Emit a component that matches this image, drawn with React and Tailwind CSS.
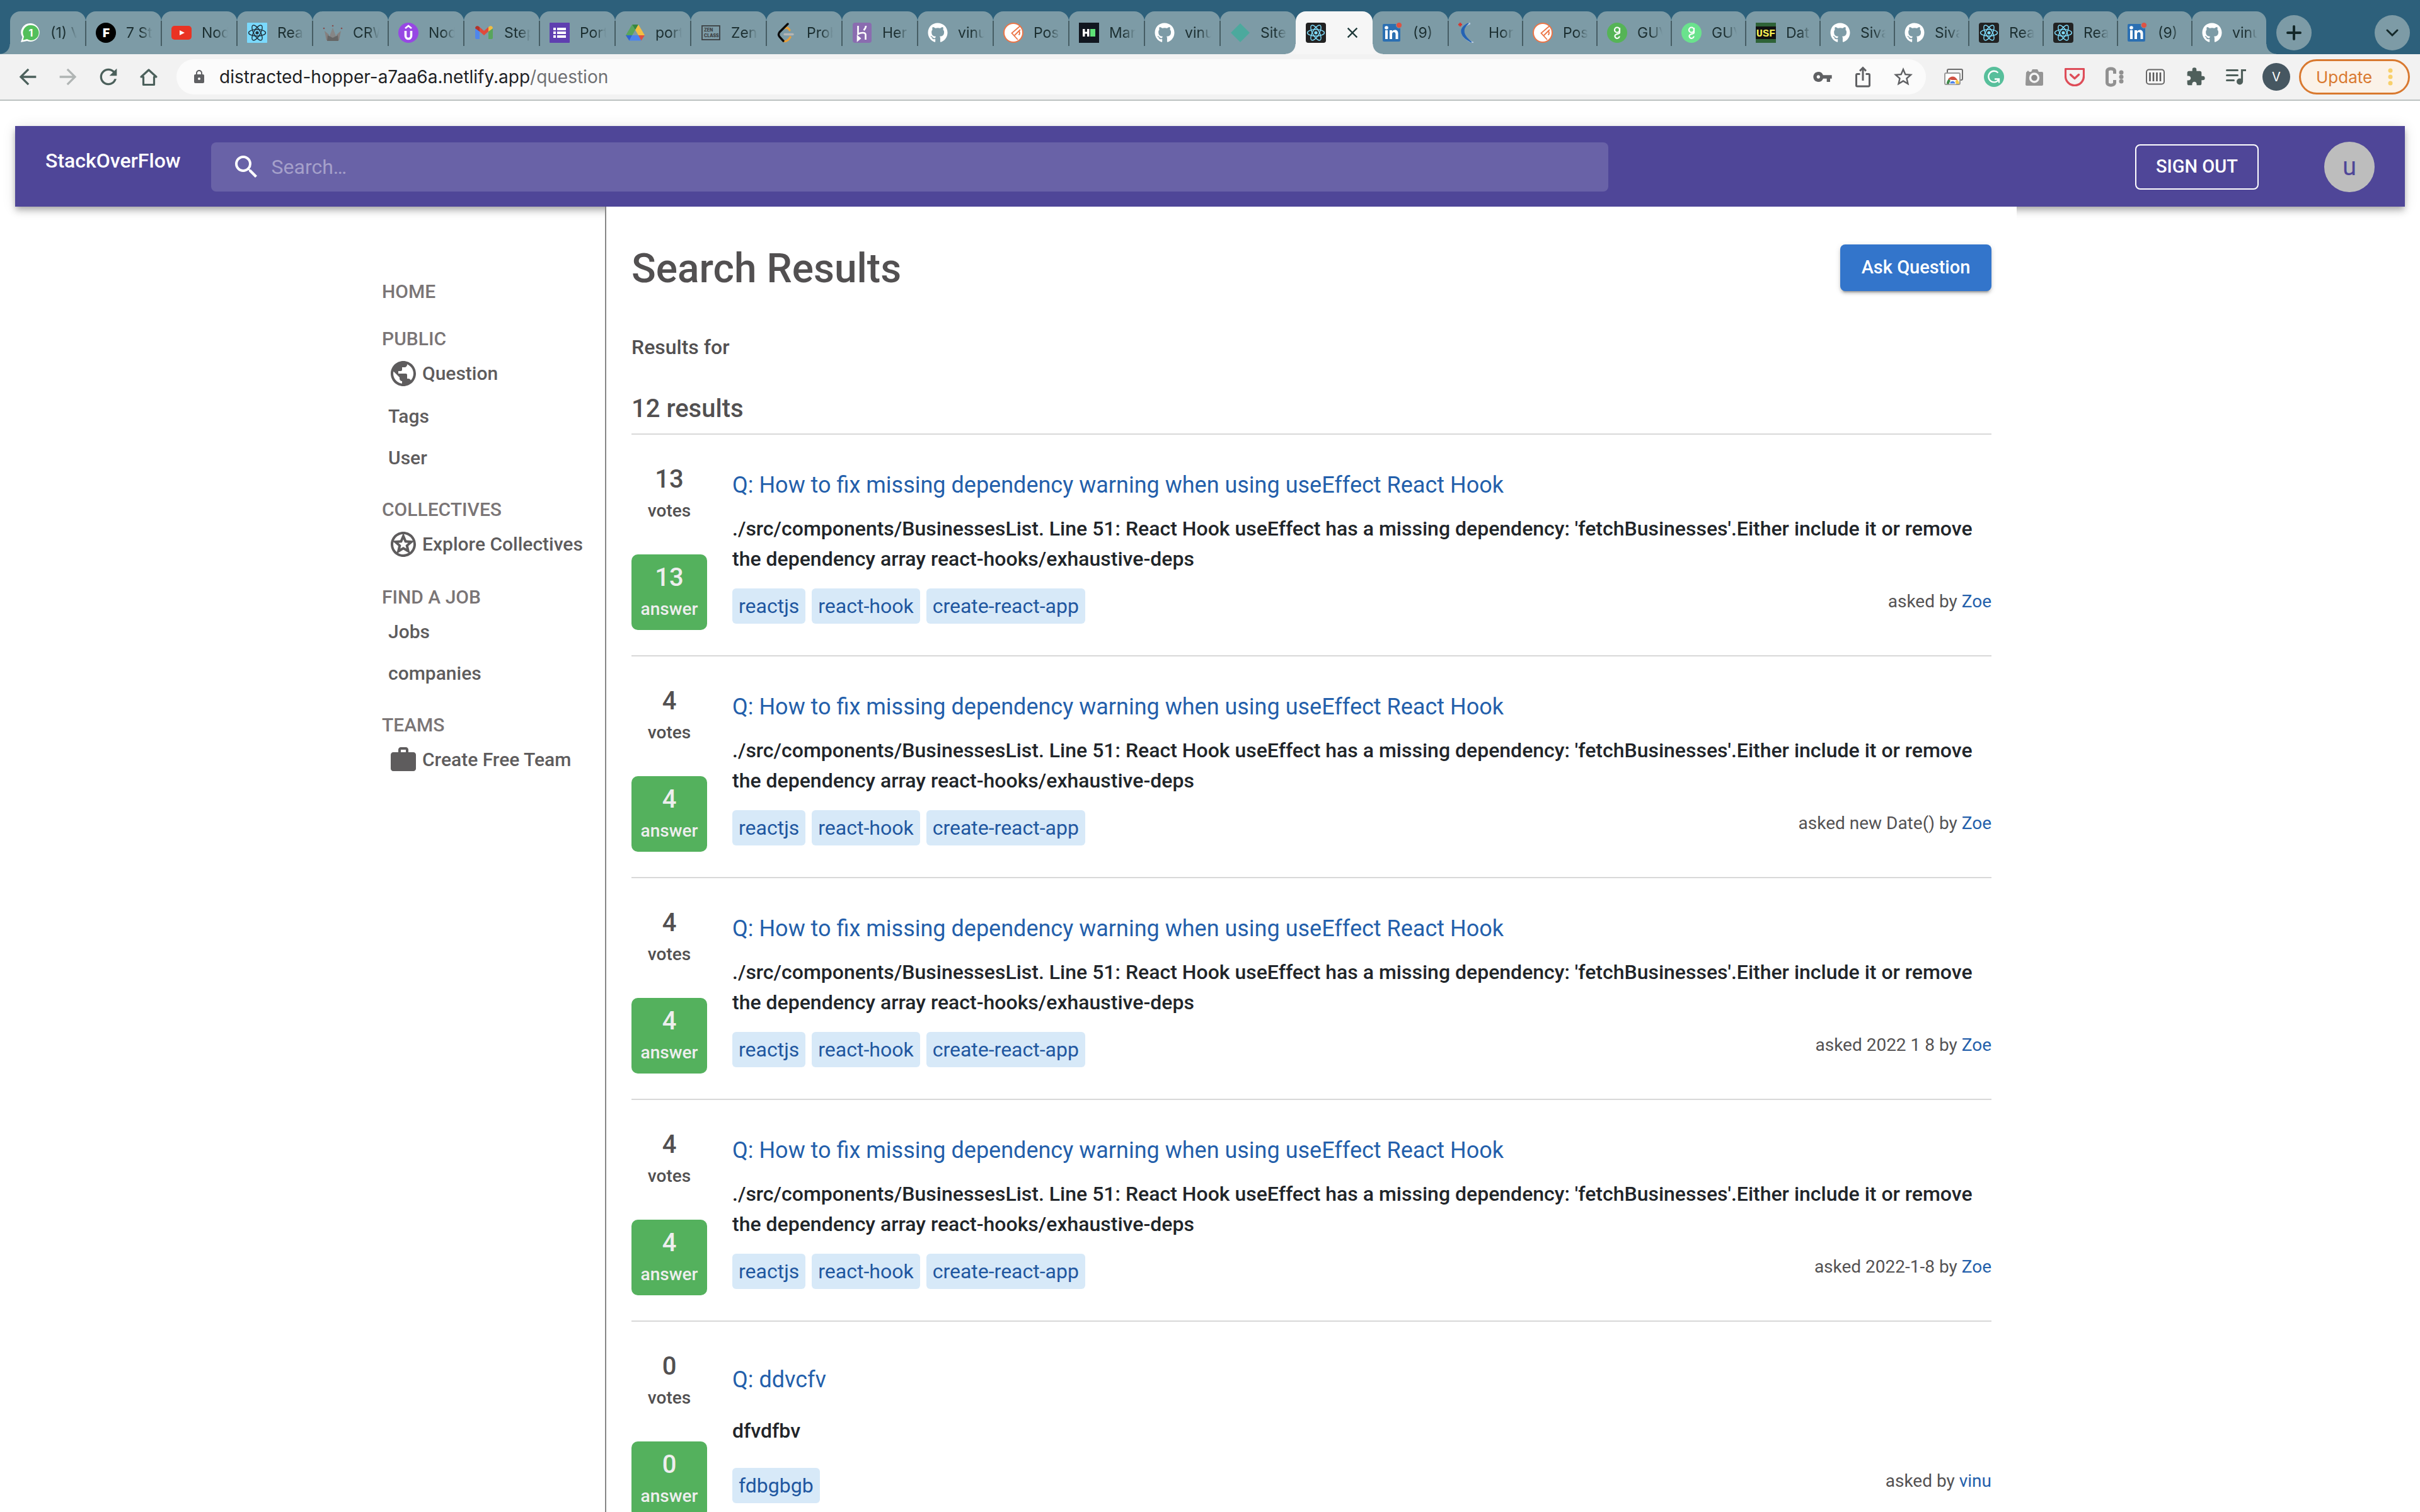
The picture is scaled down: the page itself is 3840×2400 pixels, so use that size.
import React from "react";
import {
  MdArrowBack,
  MdArrowForward,
  MdRefresh,
  MdLock,
  MdVpnKey,
  MdIosShare,
  MdStarBorder,
  MdExtension,
  MdPublic,
  MdOutlineStars,
  MdWork,
  MdSearch,
  MdClose,
} from "react-icons/md";
import { FaGithub } from "react-icons/fa";

/* ---------- favicons ---------- */

function Fav({ children }) {
  return (
    <svg viewBox="0 0 32 32" className="size-8 shrink-0" aria-hidden="true">
      {children}
    </svg>
  );
}

const glyph = { fontFamily: "Inter, sans-serif", textAnchor: "middle" };

function WhatsApp() {
  return (
    <Fav>
      <path d="M17 1a14.500 14.500 0 1 1-6 28L1 31l2.500-8A14.500 14.500 0 0 1 17 1z" fill="#fff" />
      <path d="M17 4a12 12 0 1 1-6 22l-6.500 1.800L6 22A12 12 0 0 1 17 4z" fill="#53bf5b" />
      <text x="17" y="22" fontSize="16" fontWeight="700" fill="#fff" {...glyph}>1</text>
    </Fav>
  );
}
function LetterF() {
  return (
    <Fav>
      <circle cx="16" cy="16" r="16" fill="#000" />
      <text x="16.500" y="23" fontSize="19" fontWeight="900" fill="#fff" {...glyph}>F</text>
    </Fav>
  );
}
function YouTube() {
  return (
    <Fav>
      <rect x="0" y="5" width="32" height="22" rx="5" fill="#ea3323" />
      <path d="M13 12l8 4-8 4z" fill="#fff" />
    </Fav>
  );
}
function Atom({ bg, fg, rx }) {
  return (
    <Fav>
      <rect width="32" height="32" rx={rx} fill={bg} />
      <g fill="none" stroke={fg} strokeWidth="1.400">
        <ellipse cx="16" cy="16" rx="13.500" ry="5.200" />
        <ellipse cx="16" cy="16" rx="13.500" ry="5.200" transform="rotate(60 16 16)" />
        <ellipse cx="16" cy="16" rx="13.500" ry="5.200" transform="rotate(120 16 16)" />
      </g>
      <circle cx="16" cy="16" r="2.600" fill={fg} />
    </Fav>
  );
}
const ReactLight = () => <Atom bg="#7ad9fd" fg="#20303a" rx="1" />;
const ReactDark = () => <Atom bg="#222222" fg="#7fdcfb" rx="4" />;
function Crown() {
  return (
    <Fav>
      <path d="M3 13l7 6-2 9H6z" fill="#85807f" />
      <path d="M29 13l-7 6 2 9h2z" fill="#85807f" />
      <path d="M16 8l7 18v3H9v-3z" fill="#868686" />
      <path d="M8 20l8 4 8-4 1 9H7z" fill="#666" />
      <circle cx="16" cy="5" r="1.300" fill="#85504f" />
      <circle cx="2" cy="9" r="1.300" fill="#85504f" />
      <circle cx="30" cy="9" r="1.300" fill="#85504f" />
    </Fav>
  );
}
function Udemy() {
  return (
    <Fav>
      <circle cx="16" cy="16" r="16" fill="#9747e4" />
      <path d="M11 9l5-4 5 4" fill="none" stroke="#fff" strokeWidth="2.800" />
      <path d="M11.500 13v8a4.500 4.500 0 0 0 9 0v-8" fill="none" stroke="#fff" strokeWidth="3.600" />
    </Fav>
  );
}
function Gmail() {
  return (
    <Fav>
      <path d="M2 9l7 5v12H4a2 2 0 0 1-2-2z" fill="#4f86ec" />
      <path d="M30 9l-7 5v12h5a2 2 0 0 0 2-2z" fill="#58a55c" />
      <path d="M9 7l7 6 7-6v7l-7 6-7-6z" fill="#e0493b" />
      <path d="M2 9c0-4 4-5 7-2v7l-7-5z" fill="#b3332a" />
      <path d="M30 9c0-4-4-5-7-2v7l7-5z" fill="#f1bd42" />
    </Fav>
  );
}
function Forms() {
  return (
    <Fav>
      <rect width="32" height="32" rx="1" fill="#5f3fb0" />
      <path d="M6 8h4v4H6zM12 8h14v4H12zM6 14h4v4H6zM12 14h14v4H12zM6 20h4v4H6zM12 20h14v4H12z" fill="#fff" />
    </Fav>
  );
}
function Drive() {
  return (
    <Fav>
      <path d="M11 3h10l-5 8.500z" fill="#37873f" />
      <path d="M11 3l5 8.500L6.500 28 1 20z" fill="#58a55c" />
      <path d="M21 3l10 17H21L16 11.500z" fill="#f4be42" />
      <path d="M1 20h10l-4.500 8.500z" fill="#2f63d2" />
      <path d="M11 20h10l4.500 8.500h-19z" fill="#4c84ee" />
      <path d="M31 20H21l4.500 8.500z" fill="#dd5044" />
    </Fav>
  );
}
function ZenClass() {
  return (
    <Fav>
      <rect x="2" y="5" width="28" height="22" fill="none" stroke="#3c4043" strokeWidth="1.800" />
      <text x="5" y="14" fontSize="7" fontWeight="800" fill="#3c4043" fontFamily="Inter, sans-serif">ZEN</text>
      <text x="5" y="23" fontSize="7" fontWeight="800" fill="#3c4043" fontFamily="Inter, sans-serif">CLASS</text>
    </Fav>
  );
}
function LeetCode() {
  return (
    <Fav>
      <path d="M14 8.500c3-1.500 5 0 7 3.500" fill="none" stroke="#e9a03b" strokeWidth="3.400" strokeLinecap="round" />
      <path d="M22 23c-3 5-6 7-10 6.500" fill="none" stroke="#e9a03b" strokeWidth="3.400" strokeLinecap="round" />
      <path d="M18 2L5 15c-2 2.500-2 5 0 7.500l6 6.500" fill="none" stroke="#0b0b0b" strokeWidth="3.400" strokeLinecap="round" />
      <path d="M13 18.500h13" stroke="#b5b5b5" strokeWidth="3.400" strokeLinecap="round" />
    </Fav>
  );
}
function Heroku() {
  return (
    <Fav>
      <rect x="1" width="30" height="32" rx="4" fill="#8a6cb0" />
      <path d="M9.500 5v13c4-2 12-3.500 12 1v8M22 5c0 3-1.500 5-3.500 7M9 22l3.500 3L9 28z" fill="none" stroke="#fff" strokeWidth="2.600" />
    </Fav>
  );
}
const GitHub = () => <FaGithub className="size-8 shrink-0 text-white" aria-hidden="true" />;
function Postman() {
  return (
    <Fav>
      <circle cx="16" cy="16" r="15" fill="#fff" stroke="#ec7547" strokeWidth="2" />
      <path d="M27 5L13.500 16.500L23 27M18 20l9-9" fill="none" stroke="#ec7547" strokeWidth="1.800" />
      <path d="M24.500 13c2 2 2 5 0 6.500" fill="none" stroke="#ec7547" strokeWidth="2" />
    </Fav>
  );
}
function HackerEarth() {
  return (
    <Fav>
      <rect width="32" height="32" fill="#11161f" />
      <path d="M6 10h3.500v4.500H13V10h3.500v12H13v-4.500H9.500V22H6z" fill="#fff" />
      <rect x="18" y="10" width="8" height="12" fill="#5fe277" />
    </Fav>
  );
}
function Netlify() {
  return (
    <Fav>
      <path d="M16 1l15 15-15 15L1 16z" fill="#4ca99d" />
    </Fav>
  );
}
function LinkedIn() {
  return (
    <Fav>
      <rect x="0" y="2" width="28" height="28" rx="2" fill="#2b6fb2" />
      <circle cx="6" cy="8" r="2.800" fill="#fff" />
      <path d="M4 12h4v14H4zM11 12h4v2c3-4 9.500-3 9.500 3v9h-4v-8c0-4-5.500-4-5.500 0v8h-4z" fill="#fff" />
      <circle cx="26" cy="4" r="4.600" fill="#dc5345" stroke="#7d9ba6" strokeWidth="1" />
    </Fav>
  );
}
function Swoosh() {
  return (
    <Fav>
      <path d="M19 1C-1 8 3 24 24 32" fill="none" stroke="#b9cbe2" strokeWidth="2.500" />
      <path d="M16 1C-2 10 4 23 21 31 8 21 4 11 16 1z" fill="#2563b4" stroke="#2563b4" strokeWidth="1.500" />
      <path d="M3 0v6M0 3h6" stroke="#d8362f" strokeWidth="2.600" />
    </Fav>
  );
}
function Guvi({ bg }) {
  return (
    <Fav>
      <circle cx="16" cy="16" r="16" fill={bg} />
      <circle cx="16" cy="11.500" r="4" fill="none" stroke="#fff" strokeWidth="2.200" />
      <path d="M20 8v8c0 2-7.500 1.500-7.500 5a3.600 3.600 0 0 0 7.200 .5" fill="none" stroke="#fff" strokeWidth="2.200" />
    </Fav>
  );
}
const GuviDark = () => <Guvi bg="#55b456" />;
const GuviLight = () => <Guvi bg="#6ae28d" />;
function Usf() {
  return (
    <Fav>
      <rect width="32" height="32" fill="#2f6337" />
      <rect y="6" width="32" height="20" fill="#111" />
      <text x="16" y="22" fontSize="17" fontWeight="900" fill="#f7ef53" style={{ fontFamily: "Liberation Mono, monospace", textAnchor: "middle" }}>USF</text>
    </Fav>
  );
}

/* ---------- browser chrome ---------- */

const TABS = [
  [WhatsApp, "(1) V"], [LetterF, "7 St"], [YouTube, "Nod"], [ReactLight, "Rea"],
  [Crown, "CRW"], [Udemy, "Nod"], [Gmail, "Step"], [Forms, "Port"],
  [Drive, "port"], [ZenClass, "Zen"], [LeetCode, "Prob"], [Heroku, "Her"],
  [GitHub, "vinu"], [Postman, "Pos"], [HackerEarth, "Man"], [GitHub, "vinu"],
  [Netlify, "Site"], [ReactDark, null], [LinkedIn, "(9)"], [Swoosh, "Hor"],
  [Postman, "Pos"], [GuviDark, "GUV"], [GuviLight, "GUV"], [Usf, "Dat"],
  [GitHub, "Siva"], [GitHub, "Siva"], [ReactDark, "Rea"], [ReactDark, "Rea"],
  [LinkedIn, "(9)"], [GitHub, "vinu"],
];
const ACTIVE = 17;

function Tab({ icon: Icon, label, index }) {
  const wide = index <= ACTIVE + 1 ? "w-[120px]" : "w-[118px]";
  if (index === ACTIVE) {
    return (
      <div className="relative flex h-[68px] w-[122px] shrink items-center justify-between rounded-t-[16px] bg-[#f6f6f6] pr-[18px] pl-4">
        <span className="absolute bottom-0 -left-4 size-4 bg-[radial-gradient(circle_at_0_0,#7d9ba6_15px,#f5f5f5_16px)]" />
        <Icon />
        <button type="button" aria-label="Close tab" className="text-[#1f3a3a]">
          <MdClose className="size-7" />
        </button>
        <span className="absolute -right-4 bottom-0 z-10 size-4 bg-[radial-gradient(circle_at_100%_0,#7d9ba6_15px,#f5f5f5_16px)]" />
      </div>
    );
  }
  const last = index === TABS.length - 1;
  return (
    <div className={`relative flex h-[68px] shrink items-center gap-4 rounded-t-[16px] bg-[#7d9ba6] pr-3.5 pl-4 ${wide}`}>
      {index === 0 && (
        <span className="absolute bottom-0 -left-4 size-4 bg-[radial-gradient(circle_at_0_0,#2d607b_15px,#7d9ba6_16px)]" />
      )}
      <Icon />
      <span className="min-w-0 flex-1 overflow-hidden whitespace-nowrap text-[23px] leading-8 text-[#1c2f31] [mask-image:linear-gradient(to_right,black_55%,transparent)]">
        {label}
      </span>
      {!last && index !== ACTIVE - 1 && (
        <span className="absolute top-[15px] -right-px z-10 h-10 w-0.5 bg-[#465d64]" />
      )}
      {last && (
        <span className="absolute -right-4 bottom-0 size-4 bg-[radial-gradient(circle_at_100%_0,#2d607b_15px,#7d9ba6_16px)]" />
      )}
    </div>
  );
}

function TabStrip() {
  return (
    <div className="flex items-start bg-[#2d607b] pt-[18px] pr-4 pl-4">
      {TABS.map(([icon, label], i) => (
        <Tab key={i} icon={icon} label={label} index={i} />
      ))}
      <button type="button" aria-label="New tab" className="mt-1.5 ml-4 flex size-14 shrink-0 items-center justify-center rounded-full bg-[#7d9ba6] text-[#142829]">
        <svg viewBox="0 0 24 24" className="size-6" fill="none" stroke="currentColor" strokeWidth="4" strokeLinecap="round" aria-hidden="true">
          <path d="M12 2v20M2 12h20" />
        </svg>
      </button>
      <button type="button" aria-label="Search tabs" className="mt-1.5 ml-auto flex size-14 shrink-0 items-center justify-center rounded-full bg-[#7d9ba6] text-[#142829]">
        <svg viewBox="0 0 20 20" className="size-5" fill="none" stroke="currentColor" strokeWidth="3" strokeLinecap="round" aria-hidden="true">
          <path d="M2 6l8 8 8-8" />
        </svg>
      </button>
    </div>
  );
}

function HomeIcon() {
  return (
    <svg viewBox="0 0 40 40" className="size-10" fill="none" stroke="currentColor" strokeWidth="3.200" aria-hidden="true">
      <path d="M8 20L20 9l12 11h-3.500v12.500h-17V20z" strokeLinejoin="round" />
    </svg>
  );
}

function Ext({ label, children }) {
  return (
    <button type="button" aria-label={label} className="shrink-0">
      <svg viewBox="0 0 32 32" className="size-8" aria-hidden="true">
        {children}
      </svg>
    </button>
  );
}

function Extensions() {
  return (
    <div className="ml-7 flex items-center gap-8">
      <Ext label="Remote desktop">
        <rect x="6" y="4" width="24" height="17" rx="2" fill="#f4f4f4" stroke="#6d6d6d" strokeWidth="2" />
        <rect x="2" y="10" width="24" height="18" rx="2" fill="#fff" stroke="#9a9a9a" strokeWidth="2" />
        <path d="M5 27a9 9 0 0 1 4-8l4 8z" fill="#3f8b4a" />
        <path d="M25 27a9 9 0 0 0-4-7l-5 7z" fill="#f3c94b" />
        <path d="M7 20c4-6.500 12-6 15 1H14z" fill="#cf5142" />
        <path d="M9.500 27a4.800 4.800 0 0 1 9.600 0z" fill="#4b82ea" stroke="#fff" strokeWidth="1.200" />
      </Ext>
      <Ext label="Grammar checker">
        <circle cx="16" cy="16" r="16" fill="#57bf9b" />
        <path d="M22.500 9.500A8.800 8.800 0 1 0 24 19.500M17 19.500h7v6" fill="none" stroke="#fff" strokeWidth="2.300" />
      </Ext>
      <Ext label="Screenshot">
        <path d="M3 9l3-3 2 2h3l2-4h8l2 4h5a2 2 0 0 1 2 2v18a2 2 0 0 1-2 2H4a2 2 0 0 1-2-2z" fill="#959595" />
        <circle cx="16" cy="17.500" r="6.500" fill="#8a8a8a" stroke="#f4f4f4" strokeWidth="3.400" />
      </Ext>
      <Ext label="Save to Pocket">
        <path d="M1.500 3.500h29V15a14.500 14.500 0 0 1-29 0z" fill="none" stroke="#de4d59" strokeWidth="3.200" strokeLinejoin="round" />
        <path d="M9.500 12.500l6.500 6 6.500-6" fill="none" stroke="#de4d59" strokeWidth="3.400" strokeLinecap="round" strokeLinejoin="round" />
      </Ext>
      <Ext label="Clipboard">
        <path d="M15.500 11V7c0-5.500-12-5.500-12 0v18c0 5.500 12 5.500 12 0v-4" fill="none" stroke="#919191" strokeWidth="5" />
        <circle cx="26" cy="9" r="3.500" fill="#919191" />
        <circle cx="26" cy="16" r="3.500" fill="#919191" />
        <circle cx="26" cy="23" r="3.500" fill="#919191" />
      </Ext>
      <Ext label="Barcode">
        <rect x="2" y="4.500" width="28" height="23" rx="4" fill="#f7f7f7" stroke="#676767" strokeWidth="2" />
        <path d="M7.500 9v14M13 9v14M18.500 9v14M24 9v14" stroke="#5b5b5b" strokeWidth="2.600" />
      </Ext>
      <button type="button" aria-label="Extensions" className="text-[#4f5f5b]">
        <MdExtension className="size-8" />
      </button>
      <Ext label="Media controls">
        <path d="M1.500 5.500h17M1.500 13.500h17M1.500 21.500h11" stroke="#4f5f5b" strokeWidth="3" strokeLinecap="round" />
        <circle cx="22" cy="23.500" r="5" fill="#4f5f5b" />
        <path d="M25.500 24V5.500H32" fill="none" stroke="#4f5f5b" strokeWidth="3.200" />
      </Ext>
    </div>
  );
}

function Toolbar() {
  return (
    <div className="flex items-center border-b-2 border-[#bcc2c1] bg-[#f2f2f2] py-2 pr-4 pl-6">
      <div className="flex shrink-0 items-center gap-6 text-[#4b605b]">
        <button type="button" aria-label="Back"><MdArrowBack className="size-10" /></button>
        <button type="button" aria-label="Forward" className="text-[#b0b5b4]"><MdArrowForward className="size-10" /></button>
        <button type="button" aria-label="Reload"><MdRefresh className="size-10" /></button>
        <button type="button" aria-label="Home page"><HomeIcon /></button>
      </div>
      <div className="ml-6 flex h-14 min-w-0 flex-1 items-center rounded-full bg-[#fbfbfb] pr-[18px] pl-6 text-[#5f6063]">
        <MdLock className="size-6 shrink-0" />
        <a href="#question" className="ml-5 min-w-0 flex-1 truncate text-[28px] leading-10 text-[#202124]">
          distracted-hopper-a7aa6a.netlify.app<span className="text-[#6f7073]">/question</span>
        </a>
        <div className="flex items-center gap-7">
          <button type="button" aria-label="Passwords"><MdVpnKey className="size-9 p-0.5" /></button>
          <button type="button" aria-label="Share"><MdIosShare className="size-9" /></button>
          <button type="button" aria-label="Bookmark"><MdStarBorder className="size-9" /></button>
        </div>
      </div>
      <Extensions />
      <button type="button" className="ml-[26px] size-11 shrink-0 rounded-full bg-[#465761] text-[20px] text-white">V</button>
      <button type="button" className="ml-3.5 flex h-14 w-44 shrink-0 items-center rounded-full border-3 border-[#d9792f] bg-[#fbf2e8] pl-6 text-[26px] text-[#d9792f]">
        Update
        <svg viewBox="0 0 8 32" className="ml-auto mr-6 h-8 w-2" fill="#f8d06b" aria-hidden="true">
          <circle cx="4" cy="6" r="3.500" />
          <circle cx="4" cy="16" r="3.500" />
          <circle cx="4" cy="26" r="3.500" />
        </svg>
      </button>
    </div>
  );
}

/* ---------- page ---------- */

function NavBar() {
  return (
    <header className="flex h-32 items-center bg-[#4f4698] px-12 pt-0.5 text-white shadow-[0_4px_8px_-2px_rgba(0,0,0,0.2),0_8px_10px_0_rgba(0,0,0,0.14),0_2px_20px_0_rgba(0,0,0,0.12)]">
      <a href="#top" className="pb-5 text-[32px] leading-[48px] font-medium">StackOverFlow</a>
      <label className="ml-12 flex h-[78px] w-3/5 items-center gap-4 rounded-lg bg-[#6962a7] pl-8">
        <MdSearch className="size-12 shrink-0" />
        <input
          type="text"
          aria-label="Search"
          placeholder="Search…"
          className="min-w-0 flex-1 bg-transparent text-[32px] leading-[48px] outline-none placeholder:text-[#a5a0ca]"
        />
      </label>
      <button type="button" className="ml-auto h-[72px] w-[196px] shrink-0 rounded-lg border-2 border-white text-[29px] font-medium">
        SIGN OUT
      </button>
      <span className="ml-[104px] flex size-20 shrink-0 items-center justify-center rounded-full bg-[#bdbdbd] text-[40px] text-[#4f4698]">u</span>
    </header>
  );
}

const GROUPS = [
  { label: "PUBLIC", items: [["Question", MdPublic], ["Tags"], ["User"]] },
  { label: "COLLECTIVES", items: [["Explore Collectives", MdOutlineStars]] },
  { label: "FIND A JOB", items: [["Jobs"], ["companies"]] },
  { label: "TEAMS", items: [["Create Free Team", MdWork]] },
];

function Sidebar() {
  return (
    <aside className="w-80 shrink-0 pt-[113px]">
      <nav className="-ml-[34px] flex flex-col gap-[27px] text-[30px] leading-[44px] font-medium whitespace-nowrap text-[#5e5c5d]">
        <a href="#home" className="h-12 text-[#7a7576]">HOME</a>
        {GROUPS.map((g) => (
          <section key={g.label}>
            <h2 className="text-[#7a7576]">{g.label}</h2>
            <ul>
              {g.items.map(([name, Icon]) => (
                <li key={name} className={Icon ? "pb-0.5 pl-2.5" : "pl-2.5"}>
                  <a href="#item" className="flex h-[66px] items-center gap-1.5">
                    {Icon && <Icon className="size-12" aria-hidden="true" />}
                    {name}
                  </a>
                </li>
              ))}
            </ul>
          </section>
        ))}
      </nav>
    </aside>
  );
}

const HOOK = {
  title: "How to fix missing dependency warning when using useEffect React Hook",
  body: "./src/components/BusinessesList. Line 51: React Hook useEffect has a missing dependency: 'fetchBusinesses'.Either include it or remove the dependency array react-hooks/exhaustive-deps",
  tags: ["reactjs", "react-hook", "create-react-app"],
  user: "Zoe",
};
const QUESTIONS = [
  { ...HOOK, count: 13, asked: "asked by" },
  { ...HOOK, count: 4, asked: "asked new Date() by" },
  { ...HOOK, count: 4, asked: "asked 2022 1 8 by" },
  { ...HOOK, count: 4, asked: "asked 2022-1-8 by" },
  { title: "ddvcfv", body: "dfvdfbv", tags: ["fdbgbgb"], user: "vinu", count: 0, asked: "asked by" },
];

function Stat({ value, label, green }) {
  const tone = green ? "bg-[#54b15d] text-[#eeeeee]" : "text-[#525051]";
  return (
    <div className={`size-[120px] rounded-[10px] pt-[7px] text-center font-medium ${tone}`}>
      <div className="text-[40px] leading-[60px]">{value}</div>
      <div className="text-[28px] leading-10">{label}</div>
    </div>
  );
}

function Question({ q }) {
  return (
    <li className="flex gap-10 border-b-2 border-[#d8d8d8] pt-[34px] pb-10">
      <div className="flex shrink-0 flex-col gap-9">
        <Stat value={q.count} label="votes" />
        <Stat value={q.count} label="answer" green />
      </div>
      <article className="flex min-w-0 flex-1 flex-col justify-evenly">
        <h3 className="pt-[9px] pb-2 text-[36px] leading-[54px] text-[#235fab]">
          <a href="#question">Q: {q.title}</a>
        </h3>
        <p className="pb-[13px] text-[32px] leading-[48px] font-medium text-[#212529]">{q.body}</p>
        <div className="flex items-start justify-between">
          <div className="flex gap-2.5 text-[32px] leading-[56px] text-[#1f57a0]">
            {q.tags.map((t) => (
              <a key={t} href="#tag" className="rounded-md bg-[#d7e9f8] px-2.5">{t}</a>
            ))}
          </div>
          <p className="text-[28px] leading-[42px] text-[#545253]">
            {q.asked} <a href="#user" className="text-[#235fab]">{q.user}</a>
          </p>
        </div>
      </article>
    </li>
  );
}

export default function App() {
  return (
    <div id="top" className="flex h-screen flex-col overflow-hidden bg-white font-[Roboto,sans-serif]">
      <div className="shrink-0 font-[Inter,sans-serif]">
        <TabStrip />
        <Toolbar />
      </div>
      <div className="min-h-0 flex-1 overflow-hidden px-6 pt-10">
        <NavBar />
        <div className="mx-auto flex max-w-[2560px]">
          <Sidebar />
          <main className="relative min-w-0 flex-1 border-l-2 border-[#868686] bg-white px-10 pt-[60px]">
            <div className="flex items-center justify-between">
              <h1 className="pt-1 text-[64px] leading-none font-medium text-[#525051]">Search Results</h1>
              <button type="button" className="h-[74px] w-[240px] rounded-lg bg-[#3375cb] text-[29px] font-medium text-white shadow-[0_6px_2px_-4px_rgba(0,0,0,0.2),0_4px_4px_0_rgba(0,0,0,0.14),0_2px_10px_0_rgba(0,0,0,0.12)]">
                Ask Question
              </button>
            </div>
            <p className="mt-[65px] text-[32px] leading-[48px] font-medium text-[#525051]">Results for</p>
            <h2 className="mt-11 border-b-2 border-[#d8d8d8] pb-[9px] text-[40px] leading-[60px] font-medium text-[#525051]">12 results</h2>
            <ul>
              {QUESTIONS.map((q, i) => (
                <Question key={i} q={q} />
              ))}
            </ul>
          </main>
        </div>
      </div>
    </div>
  );
}
